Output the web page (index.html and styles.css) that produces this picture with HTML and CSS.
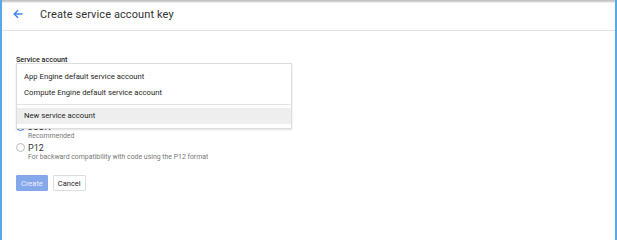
FILE: index.html
```html
<!DOCTYPE html>
<html lang="en">
<head>
  <meta charset="UTF-8" />
  <title>Create service account key</title>
  <link rel="stylesheet" href="styles.css">
</head>
<body>
  <div class="frame">
    <!-- header -->
    <header class="page-header">
      <a class="back" href="#">
        <svg width="10" height="10" viewBox="0 0 10 10">
          <path d="M9.5 5H1.5M5 1.2L1.2 5 5 8.8" fill="none" stroke="#4285f4" stroke-width="1.4"/>
        </svg>
      </a>
      <h1>Create service account key</h1>
    </header>

    <main class="content">
      <div class="field">
        <label class="field-label">Service account</label>
        <div class="select"></div>

        <!-- open dropdown -->
        <ul class="menu">
          <li>App Engine default service account</li>
          <li>Compute Engine default service account</li>
          <li class="divider"></li>
          <li class="hover">New service account</li>
        </ul>
      </div>

      <div class="field">
        <div class="radio checked">
          <span class="dot"></span>
          <div>
            <div class="radio-title">JSON</div>
            <div class="radio-sub">Recommended</div>
          </div>
        </div>
        <div class="radio">
          <span class="dot"></span>
          <div>
            <div class="radio-title">P12</div>
            <div class="radio-sub">For backward compatibility with code using the P12 format</div>
          </div>
        </div>
      </div>

      <div class="actions">
        <button class="btn primary" disabled>Create</button>
        <button class="btn">Cancel</button>
      </div>
    </main>
  </div>
</body>
</html>
```

FILE: styles.css
```css
* {
  box-sizing: border-box;
}
html, body {
  margin: 0;
  height: 100%;
}
body {
  font-family: Roboto, "Liberation Sans", sans-serif;
  color: #333;
  background: #fff;
}
.frame {
  height: 240px;
  border-left: 2px solid #5aa6e8;
  border-right: 2px solid #5aa6e8;
  position: relative;
  overflow: hidden;
}

/* header */
.page-header {
  height: 31px;
  display: flex;
  align-items: center;
  padding-left: 11px;
  padding-bottom: 2px;
  border-bottom: 1px solid #e2e2e2;
  box-shadow: inset 0 3px 2px -1px rgba(0, 0, 0, 0.25);
}
.back {
  display: flex;
  width: 10px;
  height: 10px;
  margin-right: 17px;
}
.page-header h1 {
  margin: 0;
  font-size: 11px;
  font-weight: 400;
  color: #333;
  letter-spacing: 0.1px;
}

/* form */
.content {
  padding: 24px 14px 0;
}
.field {
  position: relative;
}
.field-label {
  display: block;
  font-size: 7.2px;
  font-weight: 500;
  color: #222;
  line-height: 10px;
}
.select {
  width: 276px;
  height: 22px;
  margin-bottom: 34.5px;
}

/* dropdown menu */
.menu {
  position: absolute;
  top: 8px;
  left: 0;
  width: 276px;
  margin: 0;
  padding: 5px 0 4px;
  list-style: none;
  background: #fff;
  border: 1px solid #ddd;
  box-shadow: 0 1px 2px rgba(0, 0, 0, 0.12);
  z-index: 2;
}
.menu li {
  height: 16px;
  line-height: 16px;
  padding-left: 7px;
  font-size: 7.7px;
  color: #262626;
}
.menu li.divider {
  height: 1px;
  margin: 3px 0 3px;
  background: #e4e4e4;
}
.menu li.hover {
  background: #eee;
}

/* radios */
.radio {
  display: flex;
  gap: 3px;
  margin-bottom: 2px;
}
.dot {
  flex: none;
  width: 9px;
  height: 9px;
  border: 1px solid #bbb;
  border-radius: 50%;
  margin-top: 0.5px;
  position: relative;
}
.radio.checked .dot {
  border-color: #4285f4;
}
.radio.checked .dot::after {
  content: "";
  position: absolute;
  left: 1.5px;
  top: 1.5px;
  width: 4px;
  height: 4px;
  border-radius: 50%;
  background: #4285f4;
}
.radio-title {
  font-size: 9px;
  line-height: 10px;
  color: #333;
}
.radio-sub {
  font-size: 6.9px;
  line-height: 9px;
  color: #777;
}

/* buttons */
.actions {
  display: flex;
  gap: 5px;
  margin-top: 13.5px;
}
.btn {
  height: 16px;
  padding: 0 4px;
  font-family: inherit;
  font-size: 7.5px;
  color: #262626;
  background: #fff;
  border: 1px solid #ddd;
  border-radius: 1px;
}
.btn.primary {
  background: #85a8ea;
  border-color: #85a8ea;
  color: #e8eefb;
}
```
